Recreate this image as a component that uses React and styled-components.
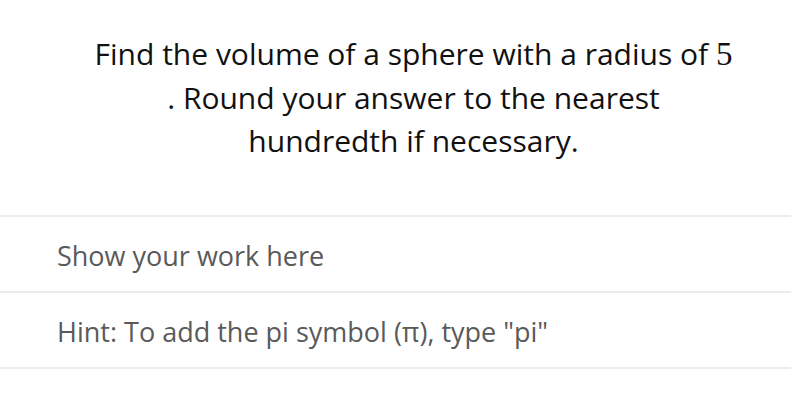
import styled, { createGlobalStyle } from "styled-components";

const Global = createGlobalStyle`
    body {
        margin: 0;
        background: #ffffff;
        font-family: "Open Sans", "Noto Sans", sans-serif;
    }
`

const Page = styled.div`
    display: flex;
    flex-direction: column;
    width: 791px;
    height: 415px;
    overflow: hidden;
    background: #ffffff;
`

const Question = styled.div`
    display: flex;
    justify-content: center;
    padding: 32px 20px 0 56px;
    height: 215px;
    box-sizing: border-box;
`

const QuestionText = styled.p`
    margin: 0;
    text-align: center;
    font-size: 30px;
    line-height: 43px;
    color: #111111;
`

const MathNum = styled.span`
    font-family: "Liberation Serif", "DejaVu Serif", serif;
    font-size: 33px;
`

const Field = styled.div`
    display: flex;
    align-items: center;
    padding: 2px 57px 0;
    box-sizing: border-box;
    height: 76px;
    border-top: 2px solid #ececec;
    font-size: 27px;
    color: #5a5a5a;

    &:last-child {
        height: 78px;
        border-bottom: 2px solid #ececec;
    }
`

const App = () => {
    return (
        <Page>
            <Global />
            <Question>
                <QuestionText>
                    Find the volume of a sphere with a radius of <MathNum>5</MathNum>
                    <br />. Round your answer to the nearest
                    <br />hundredth if necessary.
                </QuestionText>
            </Question>
            <Field>Show your work here</Field>
            <Field>Hint: To add the pi symbol (π), type "pi"</Field>
        </Page>
    )
}

export default App
